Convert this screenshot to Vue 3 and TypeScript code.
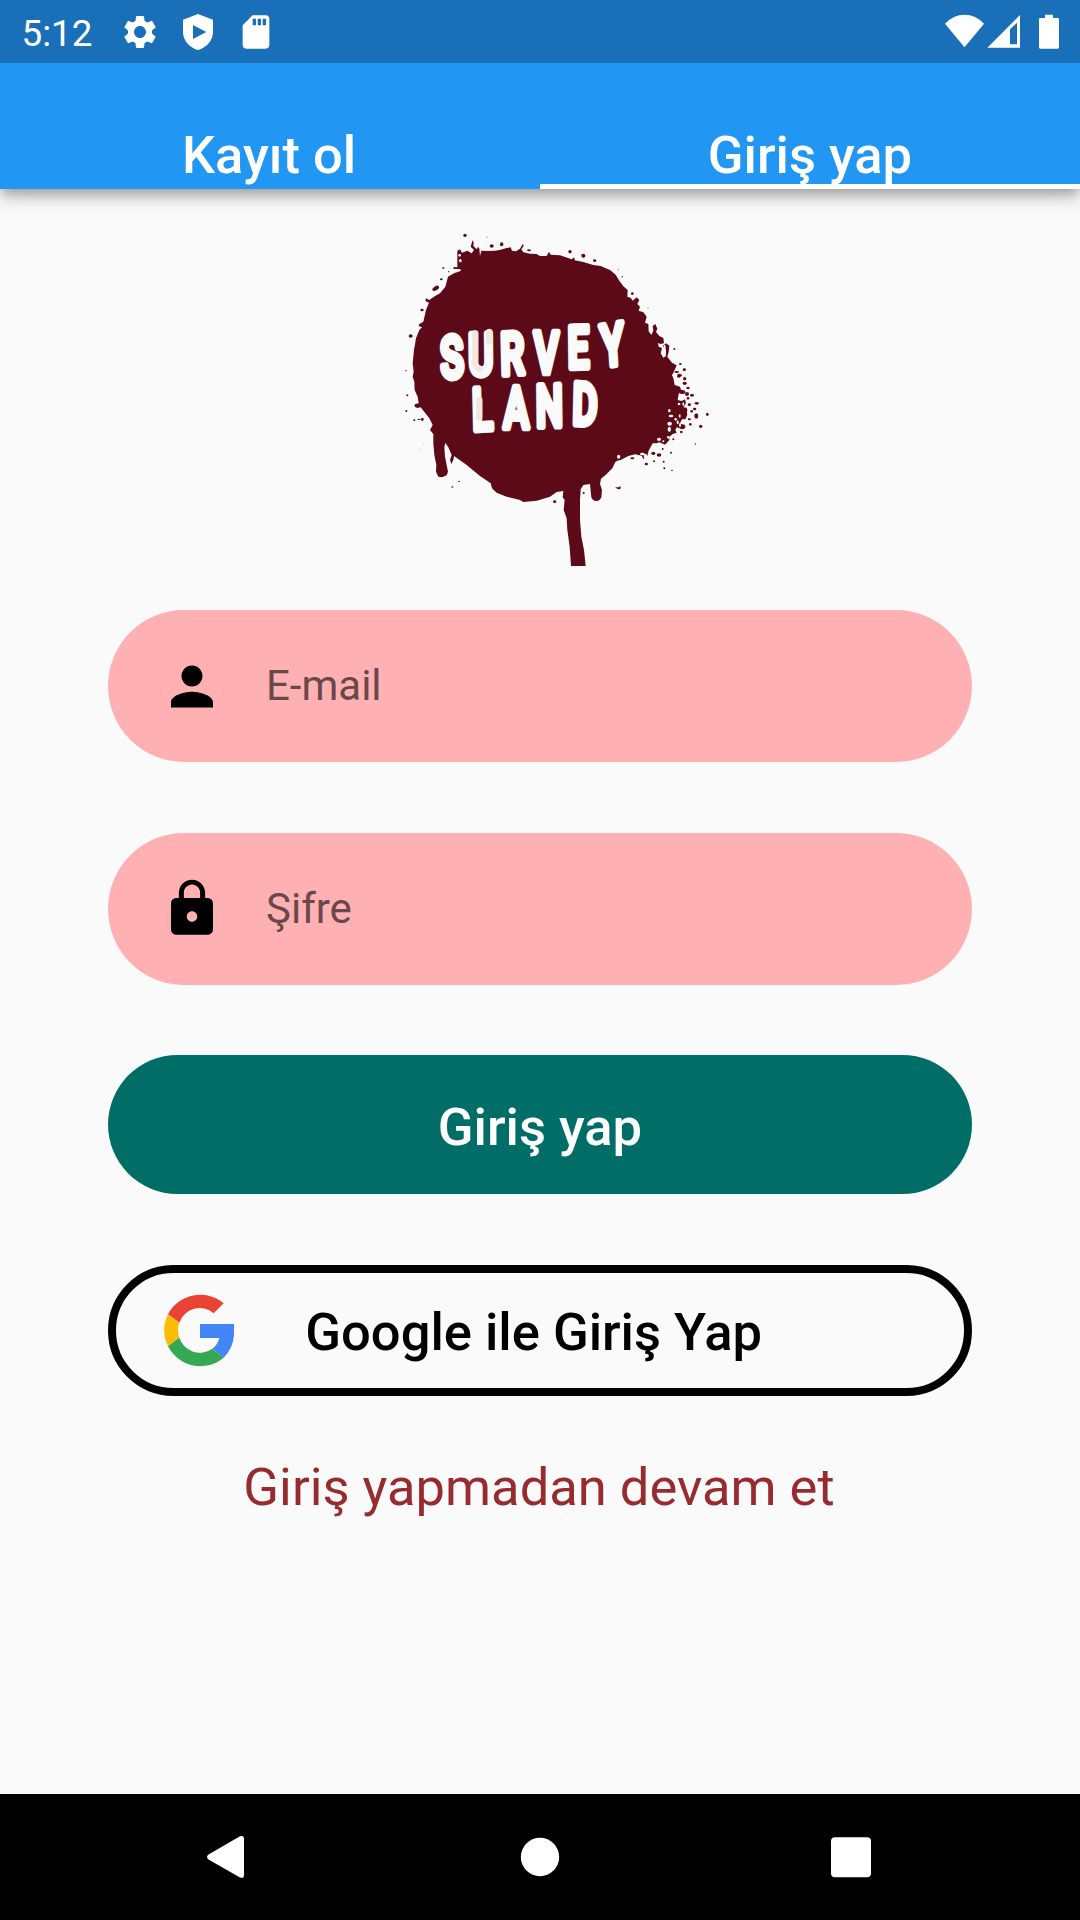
<script setup lang="ts">
import { ref } from 'vue'

type Speck = [x: number, y: number, rx: number, ry?: number]

const tabs = ['Kayıt ol', 'Giriş yap']
const activeTab = ref(1)
const email = ref('')
const password = ref('')

// Paint droplets around the logo blot
const specks: Speck[] = [
  [255, 76, 5], [335, 108, 6, 5], [365, 103, 5, 6], [447, 121, 6, 3], [570, 125, 5], [610, 137, 6],
  [644, 152, 5, 4], [715, 179, 1.5], [727, 200, 2], [757, 251, 4], [190, 174, 4, 2], [184, 208, 4, 3],
  [206, 185, 2], [126, 300, 5, 4], [92, 378, 6, 5], [78, 482, 2], [82, 556, 3], [79, 603, 3],
  [103, 631, 3], [127, 628, 4, 5], [117, 628, 5, 2], [237, 814, 3, 2], [217, 831, 3, 2],
  [524, 875, 5, 4], [611, 849, 3], [883, 417, 3], [901, 462, 4, 3], [913, 479, 5, 4],
  [898, 497, 8, 6], [890, 486, 7, 3], [914, 506, 5], [914, 520, 6, 5], [924, 534, 5, 4], [907, 546, 9, 6],
  [921, 552, 6], [936, 556, 6, 4], [924, 565, 4], [950, 580, 6, 4], [928, 584, 5, 4],
  [912, 600, 10, 8], [944, 597, 5, 4], [935, 604, 4], [982, 613, 4, 5], [949, 618, 6, 8],
  [928, 628, 5, 3], [931, 643, 4], [962, 649, 5], [946, 702, 2], [907, 650, 9, 7], [904, 666, 4],
  [872, 600, 8, 6], [880, 688, 3], [873, 728, 3], [837, 735, 7, 5], [848, 717, 3], [820, 730, 6, 5],
  [851, 755, 3], [822, 754, 3], [799, 762, 5, 4], [757, 745, 6, 3], [853, 775, 3], [876, 781, 3, 2],
]

// Bare spots inside the blot
const gaps: Speck[] = [
  [239, 136, 4], [241, 152, 4, 5], [716, 740, 5, 6], [868, 602, 4, 5], [873, 618, 7, 4], [887, 628, 4],
  [869, 641, 7, 6], [868, 658, 5, 8], [893, 637, 3, 6], [899, 618, 3, 5], [837, 688, 6, 5],
  [865, 682, 4], [850, 694, 3], [887, 496, 5, 7], [904, 506, 4, 8], [796, 738, 5, 7], [854, 412, 3, 8],
  [852, 431, 6, 5], [897, 582, 4], [910, 582, 3, 5], [787, 732, 7, 4], [900, 645, 3, 6],
]

const blot =
  'M300 138L304 122 322 123 345 122 362 119 380 114 392 112 396 122 408 124 420 116 428 102 431 108 424 118 430 127 450 131 470 132 480 138 500 138 507 125 512 134 540 136 575 148 583 142 584 151 610 156 640 165 662 168 690 180 707 194 718 212 730 229 743 240 742 260 752 263 758 272 770 262 778 270 772 282 780 290 776 302 790 307 800 320 795 338 805 342 806 364 814 375 820 362 818 348 826 342 832 356 828 366 838 378 850 384 852 400 840 402 834 398 836 410 846 414 842 430 850 443 858 438 858 418 848 408 858 400 868 407 866 425 862 440 876 458 890 466 884 480 876 496 880 504 884 525 900 530 904 542 896 552 893 570 905 573 915 568 918 580 910 592 920 600 922 615 916 628 906 628 900 640 908 645 900 655 890 652 886 660 890 668 878 672 868 680 868 690 855 704 845 700 838 697 830 700 818 700 806 722 802 737 790 747 785 737 765 733 745 738 722 750 712 752 706 756 697 775 680 792 663 806 660 822 666 840 664 862Q660 873 649 873Q638 873 634 862L630 822 610 825 602 838 600 870 600 930 604 980 612 1020 617 1068 573 1068 569 1010 562 960 560 925 551 900 554 870 548 862 550 843 530 846 510 860 470 872 430 876 420 870 380 860 350 848 336 835 332 820 300 798 260 765 222 738 220 750 214 762 210 750 215 735 205 712 196 698 193 712 195 740 204 785 200 796 186 802 175 800 168 785 169 765 163 735 160 700 160 672 150 660 158 645 148 625 135 608 122 592 112 594 104 590 104 583 116 580 113 560 104 540 103 515 98 500 101 485 98 460 102 420 108 385 118 360 126 352 116 348 118 342 130 335 138 300 147 278 136 273 138 265 148 270 165 258 180 250 196 230 204 200 222 190 242 183 242 178 218 176 222 171 232 172 232 122 240 118 246 128 262 122 275 130 282 120 272 110 278 90 281 98 280 108 290 118 294 110 298 116Z'
</script>

<template>
  <div class="screen">
    <header class="status">
      <span class="clock">5:12</span>
      <svg class="status-icon" viewBox="0 0 24 24">
        <path d="M19.14 12.94c.04-.3.06-.61.06-.94 0-.32-.02-.64-.07-.94l2.03-1.58c.18-.14.23-.41.12-.61l-1.92-3.32c-.12-.22-.37-.29-.59-.22l-2.39.96c-.5-.38-1.03-.7-1.62-.94l-.36-2.54c-.04-.24-.24-.41-.48-.41h-3.84c-.24 0-.43.17-.47.41l-.36 2.54c-.59.24-1.13.57-1.62.94l-2.39-.96c-.22-.08-.47 0-.59.22L2.74 8.87c-.12.21-.08.47.12.61l2.03 1.58c-.05.3-.09.63-.09.94s.02.64.07.94l-2.03 1.58c-.18.14-.23.41-.12.61l1.92 3.32c.12.22.37.29.59.22l2.39-.96c.5.38 1.03.7 1.62.94l.36 2.54c.05.24.24.41.48.41h3.84c.24 0 .44-.17.47-.41l.36-2.54c.59-.24 1.13-.56 1.62-.94l2.39.96c.22.08.47 0 .59-.22l1.92-3.32c.12-.22.07-.47-.12-.61l-2.01-1.58zM12 15.6c-1.98 0-3.6-1.62-3.6-3.6s1.62-3.6 3.6-3.6 3.6 1.62 3.6 3.6-1.62 3.6-3.6 3.6z" />
      </svg>
      <svg class="status-icon" viewBox="534 35 120 120">
        <path fill-rule="evenodd" d="M594 41L639 58V94C639 121 620 141 594 149C568 141 549 121 549 94V58ZM579 74V116L619 95Z" />
      </svg>
      <svg class="status-icon" viewBox="0 0 24 24">
        <path d="M18 2h-8L4 8v12c0 1.1.9 2 2 2h12c1.1 0 2-.9 2-2V4c0-1.1-.9-2-2-2zm-6 6h-2V4h2v4zm3 0h-2V4h2v4zm3 0h-2V4h2v4z" />
      </svg>
      <svg class="signals" viewBox="135 40 345 106">
        <path d="M193.500 140L135 69Q160 42 193.500 42T252 69Z" />
        <path fill-rule="evenodd" d="M262 141L360 43V141ZM330 86V131H351V66Z" />
        <path d="M435 42H459V52H473Q477 52 477 56V140Q477 144 473 144H421Q417 144 417 140V56Q417 52 421 52H435Z" />
      </svg>
    </header>

    <nav class="tabs">
      <button
        v-for="(tab, i) in tabs"
        :key="tab"
        class="tab"
        :class="{ active: i === activeTab }"
        @click="activeTab = i"
      >{{ tab }}</button>
    </nav>

    <main class="content">
      <svg class="logo" viewBox="-120 0 1200 1110">
        <g class="paint">
          <path :d="blot" />
          <ellipse v-for="(s, i) in specks" :key="i" :cx="s[0]" :cy="s[1]" :rx="s[2]" :ry="s[3] ?? s[2]" />
          <ellipse cx="167" cy="235" rx="11" ry="6" transform="rotate(-32 167 235)" />
          <path d="M705 832L716 832 722 827 721 838 713 837Z" />
        </g>
        <g class="bare">
          <ellipse v-for="(s, i) in gaps" :key="i" :cx="s[0]" :cy="s[1]" :rx="s[2]" :ry="s[3] ?? s[2]" />
        </g>
        <g class="haze">
          <circle cx="321" cy="82" r="3" />
          <circle cx="804" cy="294" r="3" />
          <circle cx="972" cy="548" r="2" />
          <circle cx="131" cy="703" r="2" />
          <circle cx="123" cy="719" r="2" />
        </g>
        <g class="lettering">
          <text transform="scale(.66 1)" x="279 402 549 700 854 1010" y="506 496 494 488 474 471" rotate="-4 -1 -2 0 -1 -6">SURVEY</text>
          <text transform="scale(.66 1)" x="420 561 709 873" y="661 653 650 642" rotate="-2 0 -1 2">LAND</text>
        </g>
        <path class="tint" d="M286 370V460Q288 474 300 476M328 366V394M298 570V622" />
      </svg>

      <label class="field">
        <svg viewBox="0 0 24 24">
          <path d="M12 12c2.210 0 4-1.790 4-4s-1.790-4-4-4-4 1.790-4 4 1.790 4 4 4zm0 2c-2.670 0-8 1.340-8 4v2h16v-2c0-2.660-5.330-4-8-4z" />
        </svg>
        <input v-model="email" type="text" placeholder="E-mail" />
      </label>
      <label class="field">
        <svg viewBox="0 0 24 24">
          <path d="M18 8h-1V6c0-2.760-2.240-5-5-5S7 3.240 7 6v2H6c-1.100 0-2 .9-2 2v10c0 1.100.9 2 2 2h12c1.100 0 2-.9 2-2V10c0-1.100-.9-2-2-2zm-6 9c-1.100 0-2-.9-2-2s.9-2 2-2 2 .9 2 2-.9 2-2 2zm3.100-9H8.900V6c0-1.710 1.390-3.100 3.100-3.100s3.100 1.390 3.100 3.100v2z" />
        </svg>
        <input v-model="password" type="password" placeholder="Şifre" />
      </label>

      <button class="login">Giriş yap</button>

      <button class="google">
        <svg viewBox="219 132 213 219">
          <path fill="#ea4335" d="M234 193A109 109 0 0 1 401 160L371 190A64 64 0 0 0 268 218Z" />
          <path fill="#fbbc05" d="M234 193A109 109 0 0 0 234 289L268 263A64 64 0 0 1 268 218Z" />
          <path fill="#34a853" d="M234 289A109 109 0 0 0 401 323L367 296A64 64 0 0 1 268 263Z" />
          <path fill="#4285f4" d="M330 222H432V241A109 109 0 0 1 401 323L367 296Q383 285 388 264H330Z" />
        </svg>
        <span>Google ile Giriş Yap</span>
      </button>

      <a class="skip">Giriş yapmadan devam et</a>
    </main>

    <footer class="navbar">
      <svg viewBox="0 0 44 44"><path d="M4.500 19.500L36 1.300Q40 0 40 4V40Q40 44 36 42.400L4.500 24.500Q1.500 22 4.500 19.500Z" /></svg>
      <svg viewBox="0 0 44 44"><circle cx="23" cy="22" r="19.200" /></svg>
      <svg viewBox="0 0 44 44"><rect x="2" y="2.200" width="40" height="40" rx="4" /></svg>
    </footer>
  </div>
</template>

<style>
body {
  margin: 0;
  background: #fafafa;
}
</style>

<style scoped>
.screen {
  display: flex;
  flex-direction: column;
  width: 1080px;
  height: 1920px;
  overflow: hidden;
  background: #fafafa;
  font-family: Roboto, sans-serif;
}

button,
input {
  margin: 0;
  padding: 0;
  border: 0;
  outline: 0;
  background: none;
  font: inherit;
}

.status {
  position: relative;
  z-index: 1;
  display: flex;
  align-items: center;
  flex: none;
  box-sizing: border-box;
  height: 63px;
  padding: 0 20px 0 21.500px;
  background: #1a70b8;
  fill: #fff;
}

.clock {
  width: 98.500px;
  padding-top: 4px;
  color: #fff;
  font-size: 36.75px;
  line-height: 44px;
}

.status-icon {
  width: 40px;
  height: 40px;
  margin-right: 18px;
}

.signals {
  width: 115px;
  height: 35.330px;
  margin-left: auto;
}

.tabs {
  display: flex;
  flex: none;
  height: 126px;
  background: #2196f3;
  box-shadow: 0 5px 10px -2px rgba(0, 0, 0, 0.2), 0 10px 13px rgba(0, 0, 0, 0.14), 0 3px 26px rgba(0, 0, 0, 0.12);
}

.tab {
  flex: none;
  box-sizing: border-box;
  width: 50%;
  padding-top: 58px;
  color: #fff;
  font-size: 52.5px;
  font-weight: 500;
  line-height: 68px;
}

.tab:first-child {
  padding-right: 2px;
}

.tab.active {
  background: linear-gradient(#fff, #fff) bottom / 100% 5px no-repeat;
}

.content {
  display: flex;
  flex: 1;
  flex-direction: column;
  align-items: center;
  padding: 21px 108px 0;
}

.logo {
  flex: none;
  width: 400px;
  height: 370px;
  margin-bottom: 30px;
}

.paint {
  fill: #5c0a18;
}

.bare {
  fill: #fafafa;
}

.haze {
  fill: #cfcaca;
}

.lettering {
  fill: #fafafa;
  stroke: #fafafa;
  stroke-width: 20px;
  stroke-linejoin: round;
  font-size: 174px;
  font-weight: 500;
}

.tint {
  fill: none;
  stroke: #f2e7de;
  stroke-width: 19px;
  stroke-linecap: round;
}

.field {
  display: flex;
  align-items: center;
  flex: none;
  box-sizing: border-box;
  width: 864px;
  height: 152.250px;
  margin-bottom: 70.400px;
  padding-left: 52px;
  border-radius: 76px;
  background: #ffb0b3;
}

.field svg {
  width: 64px;
  height: 63px;
}

.field input {
  width: 600px;
  height: 60px;
  margin-left: 42px;
  color: #000;
  font-size: 42px;
  line-height: 60px;
}

.field input::placeholder {
  color: #6a484a;
  opacity: 1;
}

.login {
  flex: none;
  box-sizing: border-box;
  width: 864px;
  height: 138.700px;
  padding-top: 5px;
  border-radius: 70px;
  background: #006d66;
  color: #fff;
  font-size: 52.5px;
  font-weight: 500;
}

.google {
  display: flex;
  align-items: center;
  flex: none;
  box-sizing: border-box;
  width: 864px;
  height: 131.250px;
  margin-top: 70.800px;
  padding-left: 47px;
  border: 8px solid #000;
  border-radius: 66px;
  color: #000;
  font-size: 52.5px;
  font-weight: 500;
}

.google svg {
  width: 71px;
  height: 73px;
}

.google span {
  margin-left: 71.300px;
  padding-top: 3px;
}

.skip {
  margin-top: 57px;
  margin-right: 2px;
  color: #972b2f;
  font-size: 52.5px;
  line-height: 68px;
}

.navbar {
  display: flex;
  align-items: center;
  justify-content: space-between;
  flex: none;
  box-sizing: border-box;
  height: 126px;
  padding: 0 207px 0 204px;
  background: #000;
  fill: #fff;
}

.navbar svg {
  width: 44px;
  height: 44px;
}
</style>
